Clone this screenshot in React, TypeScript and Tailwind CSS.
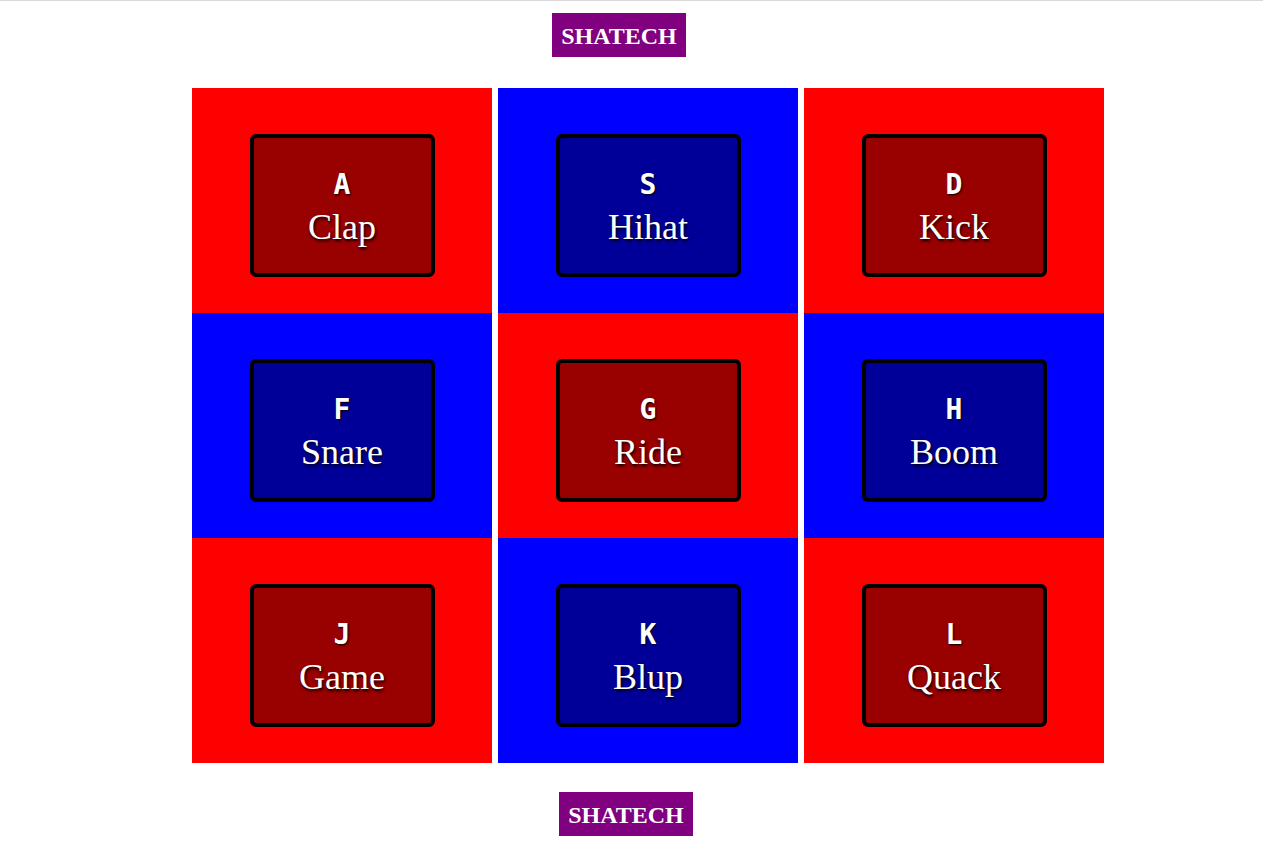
const pads = [
  { key: 'A', name: 'Clap', red: true },
  { key: 'S', name: 'Hihat', red: false },
  { key: 'D', name: 'Kick', red: true },
  { key: 'F', name: 'Snare', red: false },
  { key: 'G', name: 'Ride', red: true },
  { key: 'H', name: 'Boom', red: false },
  { key: 'J', name: 'Game', red: true },
  { key: 'K', name: 'Blup', red: false },
  { key: 'L', name: 'Quack', red: true },
]

function Brand({ className }: { className: string }) {
  return (
    <div
      className={`w-[134px] h-[44px] bg-[#800080] flex items-center justify-center pt-[2px] text-white font-bold text-[24px] font-['Liberation_Serif',serif] ${className}`}
    >
      SHATECH
    </div>
  )
}

export default function App() {
  return (
    <div className="min-h-[867px] bg-white border-t border-[#d9d9d9]">
      <Brand className="ml-[552px] mt-[12px]" />

      <div className="grid grid-cols-[300px_300px_300px] gap-x-[6px] ml-[192px] mt-[31px] w-fit">
        {pads.map((pad) => (
          <div
            key={pad.key}
            className={`h-[225px] flex justify-center pt-[46px] ${pad.red ? 'bg-[#ff0000]' : 'bg-[#0000ff]'}`}
          >
            <div
              className={`w-[185px] h-[143px] border-[4px] border-black rounded-[6px] flex flex-col items-center pt-[32px] text-white ${pad.red ? 'bg-[#990000]' : 'bg-[#000099]'}`}
            >
              <div className="font-['DejaVu_Sans_Mono',monospace] font-semibold text-[28px] leading-[30px] [text-shadow:1px_1px_2px_#000]">
                {pad.key}
              </div>
              <div className="font-['Liberation_Serif',serif] text-[36px] leading-[42px] mt-[6px] [text-shadow:1px_2px_3px_#000]">
                {pad.name}
              </div>
            </div>
          </div>
        ))}
      </div>

      <Brand className="ml-[559px] mt-[29px]" />
    </div>
  )
}
